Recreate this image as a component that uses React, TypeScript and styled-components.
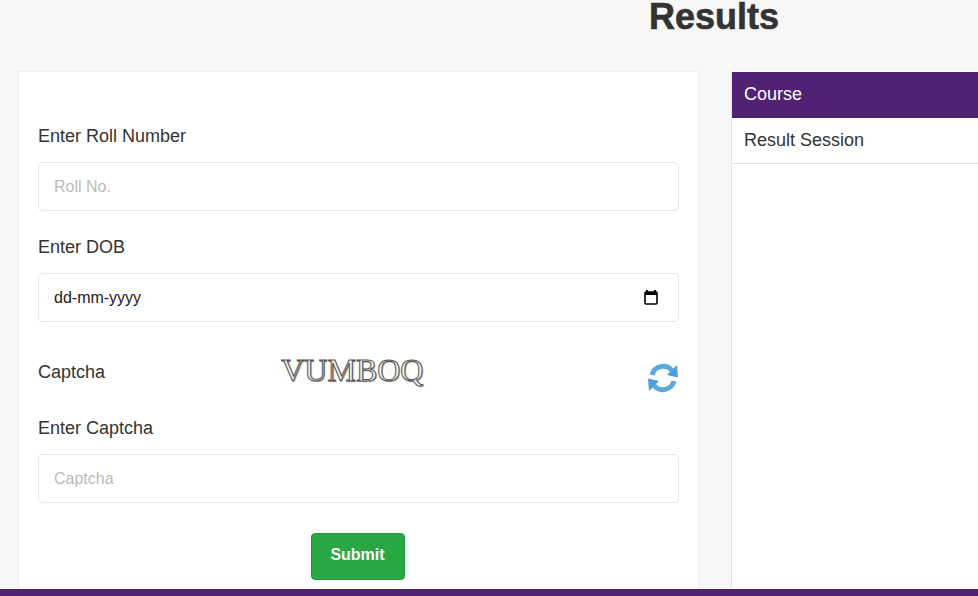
import React from 'react';
import styled, { createGlobalStyle } from 'styled-components';

const GlobalStyle = createGlobalStyle`
  html,
  body {
    margin: 0;
    height: 100%;
    overflow: hidden;
    background: #f7f7f7;
    font-family: 'Liberation Sans', Arial, sans-serif;
  }
`;

const RefreshIcon = () => (
  <svg width="32" height="32" viewBox="0 0 32 32" fill="none">
    <path d="M5 13 A11.5 11.5 0 0 1 25 8.5" stroke="#5aa9dd" strokeWidth="5" />
    <path d="M31 15.5 L20 13 L30 3 Z" fill="#4a9fd8" />
    <path d="M27 19 A11.5 11.5 0 0 1 7 23.5" stroke="#5aa9dd" strokeWidth="5" />
    <path d="M1 16.5 L12 19 L2 29 Z" fill="#4a9fd8" />
  </svg>
);

const CalendarIcon = () => (
  <svg width="14" height="15" viewBox="0 0 14 15" fill="none">
    <path d="M3 0v2M11 0v2" stroke="#000" strokeWidth="2" />
    <rect x="1" y="2" width="12" height="12" rx="1" stroke="#000" strokeWidth="1.6" />
    <rect x="1" y="2" width="12" height="3" fill="#000" />
  </svg>
);

const App = () => {
  return (
    <Page>
      <GlobalStyle />
      <Title>Results</Title>
      <Content>
        <FormCard>
          <Label>Enter Roll Number</Label>
          <TextInput placeholder="Roll No." />

          <DobLabel>Enter DOB</DobLabel>
          <DateField>
            <span>dd-mm-yyyy</span>
            <CalendarIcon />
          </DateField>

          <CaptchaRow>
            <CaptchaLabel>Captcha</CaptchaLabel>
            <CaptchaImage>VUMBOQ</CaptchaImage>
            <RefreshButton>
              <RefreshIcon />
            </RefreshButton>
          </CaptchaRow>

          <Label>Enter Captcha</Label>
          <TextInput placeholder="Captcha" />

          <SubmitRow>
            <SubmitButton>Submit</SubmitButton>
          </SubmitRow>
        </FormCard>

        <SidePanel>
          <PanelHeader>Course</PanelHeader>
          <PanelRow>Result Session</PanelRow>
        </SidePanel>
      </Content>
      <FooterBar />
    </Page>
  );
};

const Page = styled.div`
  display: flex;
  flex-direction: column;
  height: 596px;
  overflow: hidden;
`;

const Title = styled.h1`
  margin: 0;
  height: 71px;
  padding-left: 649px;
  box-sizing: border-box;
  font-size: 36px;
  line-height: 33px;
  font-weight: 700;
  color: #333;
  -webkit-text-stroke: 0.6px #333;
`;

const Content = styled.div`
  flex: 1;
  display: flex;
  gap: 32px;
  padding-left: 18px;
  min-height: 0;
`;

const FormCard = styled.div`
  box-sizing: border-box;
  width: 681px;
  flex-shrink: 0;
  padding: 46px 19px 0;
  background: #fff;
  border: 1px solid #efefef;
  border-bottom: none;
`;

const Label = styled.div`
  font-size: 18px;
  line-height: 36px;
  color: #333;
  margin-bottom: 8px;
`;

const DobLabel = styled(Label)`
  margin-top: 18px;
`;

const TextInput = styled.input`
  display: block;
  box-sizing: border-box;
  width: 100%;
  height: 49px;
  padding: 0 15px;
  font-family: inherit;
  font-size: 16px;
  background: #fff;
  border: 1px solid #e6e6e6;
  border-radius: 5px;
  outline: none;

  &::placeholder {
    color: #bbb;
    opacity: 1;
  }
`;

const DateField = styled.div`
  display: flex;
  align-items: center;
  justify-content: space-between;
  box-sizing: border-box;
  width: 100%;
  height: 49px;
  padding: 0 20px 0 15px;
  font-size: 16px;
  color: #222;
  border: 1px solid #e6e6e6;
  border-radius: 5px;
`;

const CaptchaRow = styled.div`
  display: flex;
  align-items: center;
  height: 66px;
  margin-top: 18px;
  margin-bottom: 4px;
`;

const CaptchaLabel = styled.div`
  width: 244px;
  font-size: 18px;
  color: #333;
  padding-bottom: 1px;
`;

const CaptchaImage = styled.div`
  width: 367px;
  font-family: 'Liberation Serif', 'Times New Roman', serif;
  font-size: 32px;
  line-height: 36px;
  color: #f2f2f2;
  -webkit-text-stroke: 1px #555;
  text-shadow: 1px 1px 1px #999;
  padding-bottom: 6px;
`;

const RefreshButton = styled.div`
  display: flex;
  padding-top: 10px;
`;

const SubmitRow = styled.div`
  display: flex;
  justify-content: center;
  margin-top: 30px;
`;

const SubmitButton = styled.button`
  width: 94px;
  height: 47px;
  margin-right: 2px;
  font-family: inherit;
  font-size: 16px;
  font-weight: 700;
  color: #fff;
  background: #28a745;
  border: 1px solid #24963e;
  border-radius: 4px;
  padding: 0 0 4px;
`;

const SidePanel = styled.div`
  flex: 1;
  background: #fff;
  border-left: 1px solid #e4e4e4;
`;

const PanelHeader = styled.div`
  box-sizing: border-box;
  height: 46px;
  margin-top: 1px;
  padding-left: 12px;
  font-size: 18px;
  line-height: 44px;
  color: #fff;
  background: #522173;
`;

const PanelRow = styled.div`
  box-sizing: border-box;
  height: 46px;
  padding-left: 12px;
  font-size: 18px;
  line-height: 44px;
  color: #333;
  border-bottom: 1px solid #e0e0e0;
`;

const FooterBar = styled.div`
  height: 7px;
  flex-shrink: 0;
  background: #522173;
`;

export default App;
